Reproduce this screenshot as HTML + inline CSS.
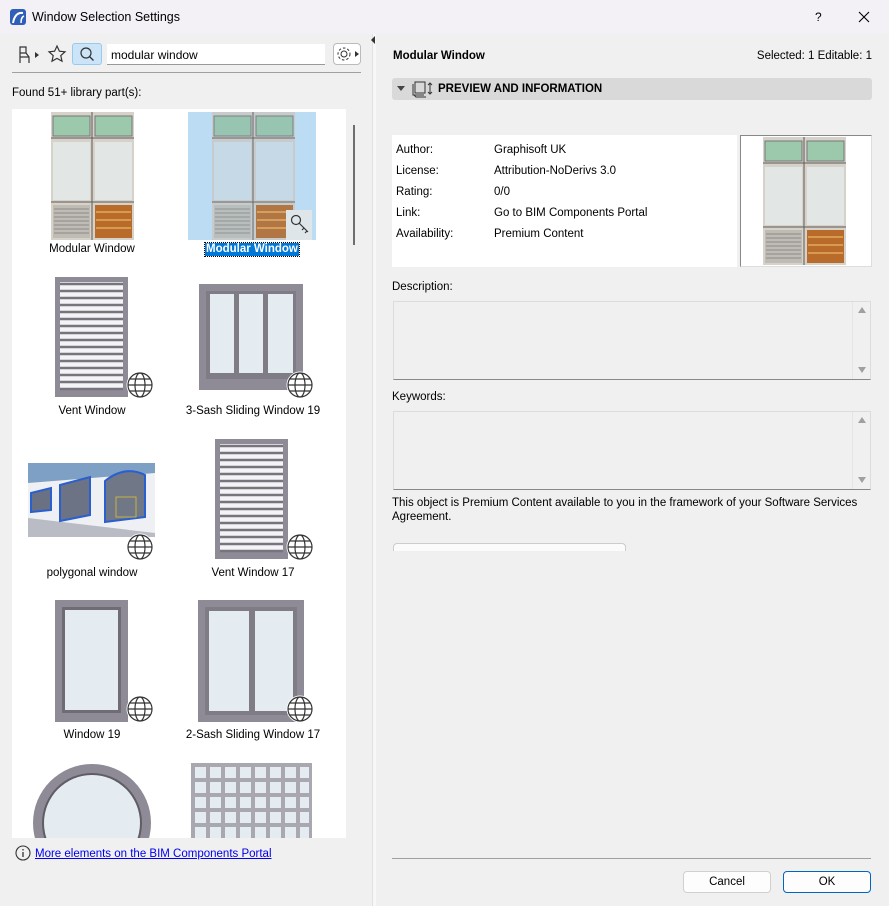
<!DOCTYPE html>
<html><head><meta charset="utf-8"><style>
*{margin:0;padding:0;box-sizing:border-box}
body{width:889px;height:906px;background:#f0f0f0;font-family:"Liberation Sans",sans-serif;font-size:11.5px;color:#000;position:relative;overflow:hidden}
.a{position:absolute}
.lbl{position:absolute;width:160px;text-align:center;font-size:11.5px}
.globe{position:absolute;width:28px;height:28px}
</style></head><body>
<!-- title bar -->
<div class="a" style="left:0;top:0;width:889px;height:34px;background:#f3f0f6"></div>
<svg class="a" style="left:10px;top:9px" width="16" height="16"><rect width="16" height="16" rx="3" fill="#2f5fb8"/><path d="M3 14 Q5 3 13 4" stroke="#fff" stroke-width="2" fill="none"/><path d="M11 14 Q11 8 14 7" stroke="#fff" stroke-width="1.5" fill="none"/></svg>
<div class="a" style="left:32px;top:10px;font-size:12.5px">Window Selection Settings</div>
<div class="a" style="left:815px;top:10px;font-size:12px">?</div>
<svg class="a" style="left:858px;top:11px" width="12" height="12"><path d="M1 1L11 11M11 1L1 11" stroke="#000" stroke-width="1.1"/></svg>

<!-- left toolbar -->
<svg class="a" style="left:17px;top:45px" width="24" height="20"><path d="M3 2h6v6H3zM3 8v10M9 8l3 4v6M3 12h9" stroke="#333" fill="none" stroke-width="1.2"/><path d="M18 7l4 3-4 3z" fill="#333"/></svg>
<svg class="a" style="left:47px;top:44px" width="20" height="20"><path d="M10 2l2.4 5.2 5.6.6-4.2 3.8 1.2 5.6L10 14.4 5 17.2l1.2-5.6L2 7.8l5.6-.6z" stroke="#333" fill="none" stroke-width="1.2"/></svg>
<div class="a" style="left:72px;top:43px;width:30px;height:22px;background:#cce4f7;border:1px solid #99c9ef;border-radius:3px"></div>
<svg class="a" style="left:79px;top:46px" width="16" height="16"><circle cx="7" cy="7" r="5" stroke="#333" fill="none" stroke-width="1.2"/><path d="M10.5 10.5l4 4" stroke="#333" stroke-width="1.3"/></svg>
<div class="a" style="left:107px;top:44px;width:218px;height:21px;background:#fff;border-bottom:1px solid #999;padding:4px 4px;font-size:12px">modular window</div>
<div class="a" style="left:333px;top:43px;width:28px;height:22px;background:#fff;border:1px solid #bbb;border-radius:4px"></div>
<svg class="a" style="left:335px;top:45px" width="26" height="18"><circle cx="9" cy="9" r="3" stroke="#333" fill="none"/><circle cx="9" cy="9" r="6" stroke="#333" fill="none" stroke-dasharray="2.5 2"/><path d="M20 6l4 3-4 3z" fill="#333"/></svg>
<div class="a" style="left:12px;top:72px;width:349px;height:1px;background:#a0a0a0"></div>
<div class="a" style="left:12px;top:87px">Found 51+ library part(s):</div>

<!-- list -->
<div class="a" style="left:12px;top:109px;width:334px;height:729px;background:#fff;overflow:hidden">
 <svg class="a" style="left:39px;top:3px" width="83" height="128"><rect width="83" height="128" fill="#d6d1c9"/><rect x="2" y="4" width="37" height="20" fill="#9cc8ac" stroke="#777"/><rect x="44" y="4" width="37" height="20" fill="#9cc8ac" stroke="#777"/><rect x="2" y="30" width="37" height="58" fill="#e2e6e5"/><rect x="44" y="30" width="37" height="58" fill="#e2e6e5"/><path d="M0 26h83M41 0v128M0 90h83" stroke="#5f5a55"/><rect x="2" y="93" width="37" height="33" fill="#bfbcb6"/><rect x="44" y="93" width="37" height="33" fill="#b86b2b"/><path d="M3 97h35M3 101h35M3 105h35M3 109h35M3 113h35M3 117h35M3 121h35" stroke="#8d8a86" stroke-width="1"/><path d="M45 100h35M45 108h35M45 116h35" stroke="#d89a4c" stroke-width="2"/></svg>
 <div class="lbl" style="left:0;top:134px">Modular Window</div>
 <div class="a" style="left:176px;top:3px;width:128px;height:128px;background:#bcdcf3"></div>
 <svg class="a" style="left:200px;top:3px" width="83" height="128" opacity="0.9"><rect width="83" height="128" fill="#c9cac8"/><rect x="2" y="4" width="37" height="20" fill="#95c3ac" stroke="#777"/><rect x="44" y="4" width="37" height="20" fill="#95c3ac" stroke="#777"/><rect x="2" y="30" width="37" height="58" fill="#c6d9e6"/><rect x="44" y="30" width="37" height="58" fill="#c6d9e6"/><path d="M0 26h83M41 0v128M0 90h83" stroke="#5f5a55"/><rect x="2" y="93" width="37" height="33" fill="#b8bab9"/><rect x="44" y="93" width="37" height="33" fill="#b06b30"/><path d="M3 97h35M3 101h35M3 105h35M3 109h35M3 113h35M3 117h35M3 121h35" stroke="#8d8a86"/><path d="M45 100h35M45 108h35M45 116h35" stroke="#d89a4c" stroke-width="2"/></svg>
 <div class="a" style="left:274px;top:101px;width:26px;height:30px;background:#dfe6ea"></div>
 <svg class="a" style="left:277px;top:104px" width="24" height="24"><circle cx="7" cy="7" r="4.5" stroke="#333" fill="none" stroke-width="1.2"/><path d="M10 10l9 9M15 15l-2 2M18 18l-2 2" stroke="#333" stroke-width="1.2"/></svg>
 <div class="a" style="left:193px;top:134px;height:13px;background:#0078d7;color:#fff;padding:0 1px;outline:1px dotted #000;line-height:13px;font-weight:bold">Modular Window</div>
 <svg class="a" style="left:43px;top:168px" width="73" height="120"><rect width="73" height="120" fill="#8e8b96"/><rect x="5" y="5" width="63" height="108" fill="#f4f4f6"/><g stroke="#77747e" stroke-width="2.5"><path d="M5 7h63M5 14h63M5 21h63M5 28h63M5 35h63M5 42h63M5 49h63M5 56h63M5 63h63M5 70h63M5 77h63M5 84h63M5 91h63M5 98h63M5 105h63M5 112h63"/></g></svg>
 <svg class="globe" style="left:114px;top:262px" viewBox="0 0 28 28"><circle cx="14" cy="14" r="13.5" fill="#fff"/><g stroke="#333" fill="none" stroke-width="1.2"><circle cx="14" cy="14" r="12"/><ellipse cx="14" cy="14" rx="5" ry="12"/><path d="M2 14h24M4 8h20M4 20h20"/></g></svg>
 <div class="lbl" style="left:0;top:296px">Vent Window</div>
 <svg class="a" style="left:187px;top:175px" width="104" height="106"><rect width="104" height="106" fill="#8e8b96"/><rect x="7" y="7" width="90" height="88" fill="#7f7c86"/><rect x="11" y="10" width="24" height="79" fill="#e4ebf1"/><rect x="40" y="10" width="24" height="79" fill="#e4ebf1"/><rect x="69" y="10" width="25" height="79" fill="#e4ebf1"/></svg>
 <svg class="globe" style="left:274px;top:262px" viewBox="0 0 28 28"><circle cx="14" cy="14" r="13.5" fill="#fff"/><g stroke="#333" fill="none" stroke-width="1.2"><circle cx="14" cy="14" r="12"/><ellipse cx="14" cy="14" rx="5" ry="12"/><path d="M2 14h24M4 8h20M4 20h20"/></g></svg>
 <div class="lbl" style="left:161px;top:296px">3-Sash Sliding Window 19</div>
 <svg class="a" style="left:16px;top:354px" width="127" height="74"><rect width="127" height="74" fill="#eef0f3"/><path d="M0 0h127v10L0 20z" fill="#7ea0c4"/><path d="M0 55L127 70V74H0z" fill="#b9bcc4"/><path d="M3 30l20-5v22l-20 2z" fill="#6a7182" stroke="#2a5fd0" stroke-width="2"/><path d="M32 22l30-8v38l-30 6z" fill="#6c7384" stroke="#2a5fd0" stroke-width="2"/><path d="M77 18q20-16 40-6v42l-40 5z" fill="#707786" stroke="#2a5fd0" stroke-width="2"/><path d="M88 34h20v20h-20z" fill="none" stroke="#c8b040"/></svg>
 <svg class="globe" style="left:114px;top:424px" viewBox="0 0 28 28"><circle cx="14" cy="14" r="13.5" fill="#fff"/><g stroke="#333" fill="none" stroke-width="1.2"><circle cx="14" cy="14" r="12"/><ellipse cx="14" cy="14" rx="5" ry="12"/><path d="M2 14h24M4 8h20M4 20h20"/></g></svg>
 <div class="lbl" style="left:0;top:458px">polygonal window</div>
 <svg class="a" style="left:203px;top:330px" width="73" height="120"><rect width="73" height="120" fill="#8e8b96"/><rect x="5" y="5" width="63" height="108" fill="#f4f4f6"/><g stroke="#77747e" stroke-width="2.5"><path d="M5 7h63M5 14h63M5 21h63M5 28h63M5 35h63M5 42h63M5 49h63M5 56h63M5 63h63M5 70h63M5 77h63M5 84h63M5 91h63M5 98h63M5 105h63M5 112h63"/></g></svg>
 <svg class="globe" style="left:274px;top:424px" viewBox="0 0 28 28"><circle cx="14" cy="14" r="13.5" fill="#fff"/><g stroke="#333" fill="none" stroke-width="1.2"><circle cx="14" cy="14" r="12"/><ellipse cx="14" cy="14" rx="5" ry="12"/><path d="M2 14h24M4 8h20M4 20h20"/></g></svg>
 <div class="lbl" style="left:161px;top:458px">Vent Window 17</div>
 <svg class="a" style="left:43px;top:491px" width="73" height="122"><rect width="73" height="122" fill="#8e8b96"/><rect x="7" y="7" width="59" height="106" fill="#6f6c76"/><rect x="10" y="10" width="53" height="100" fill="#e4ebf1"/></svg>
 <svg class="globe" style="left:114px;top:586px" viewBox="0 0 28 28"><circle cx="14" cy="14" r="13.5" fill="#fff"/><g stroke="#333" fill="none" stroke-width="1.2"><circle cx="14" cy="14" r="12"/><ellipse cx="14" cy="14" rx="5" ry="12"/><path d="M2 14h24M4 8h20M4 20h20"/></g></svg>
 <div class="lbl" style="left:0;top:620px">Window 19</div>
 <svg class="a" style="left:186px;top:491px" width="106" height="122"><rect width="106" height="122" fill="#8e8b96"/><rect x="7" y="7" width="92" height="108" fill="#7f7c86"/><rect x="11" y="11" width="40" height="100" fill="#e4ebf1"/><rect x="57" y="11" width="38" height="100" fill="#e4ebf1"/></svg>
 <svg class="globe" style="left:274px;top:586px" viewBox="0 0 28 28"><circle cx="14" cy="14" r="13.5" fill="#fff"/><g stroke="#333" fill="none" stroke-width="1.2"><circle cx="14" cy="14" r="12"/><ellipse cx="14" cy="14" rx="5" ry="12"/><path d="M2 14h24M4 8h20M4 20h20"/></g></svg>
 <div class="lbl" style="left:161px;top:620px">2-Sash Sliding Window 17</div>
 <svg class="a" style="left:20px;top:654px" width="120" height="80"><circle cx="60" cy="60" r="59" fill="#8e8b96"/><circle cx="60" cy="60" r="50" fill="#5f5c66"/><circle cx="60" cy="60" r="48" fill="#e4ebf1"/></svg>
 <svg class="a" style="left:179px;top:654px" width="121" height="80"><defs><pattern id="g" width="15" height="15" patternUnits="userSpaceOnUse"><rect x="4" y="4" width="11" height="11" fill="#e4ebf1"/></pattern></defs><rect width="121" height="80" fill="#a9a7b0"/><rect width="118" height="80" fill="url(#g)"/></svg>
</div>
<div class="a" style="left:353px;top:125px;width:2px;height:120px;background:#6e6e6e"></div>
<svg class="a" style="left:15px;top:845px" width="16" height="16"><circle cx="8" cy="8" r="7" stroke="#333" fill="none" stroke-width="1.1"/><path d="M8 7v5M8 4v1.5" stroke="#333" stroke-width="1.3"/></svg>
<div class="a" style="left:35px;top:848px;color:#0000ee;text-decoration:underline">More elements on the BIM Components Portal</div>

<!-- divider -->
<div class="a" style="left:372px;top:34px;width:4px;height:872px;background:#f7f7f7;border-left:1px solid #e2e2e2"></div>
<svg class="a" style="left:371px;top:36px" width="5" height="8"><path d="M4 0v8L0 4z" fill="#333"/></svg>

<!-- right -->
<div class="a" style="left:393px;top:50px;font-weight:bold">Modular Window</div>
<div class="a" style="right:17px;top:50px">Selected: 1 Editable: 1</div>
<div class="a" style="left:392px;top:78px;width:480px;height:22px;background:#d9d9d9;border-radius:3px"></div>
<svg class="a" style="left:397px;top:86px" width="8" height="6"><path d="M0 0h8L4 5z" fill="#444"/></svg>
<svg class="a" style="left:412px;top:80px" width="22" height="18"><rect x="3" y="2" width="10" height="11" fill="none" stroke="#333"/><path d="M1 4v11h11M2 15l2 2h10" stroke="#333" fill="none"/><path d="M18 3v11M16 5l2-2 2 2M16 12l2 2 2-2" stroke="#333" fill="none"/></svg>
<div class="a" style="left:438px;top:83px;font-weight:bold">PREVIEW AND INFORMATION</div>
<div class="a" style="left:392px;top:135px;width:345px;height:132px;background:#fff"></div>
<div class="a" style="left:396px;top:140px;line-height:21px">Author:<br>License:<br>Rating:<br>Link:<br>Availability:</div>
<div class="a" style="left:494px;top:140px;line-height:21px">Graphisoft UK<br>Attribution-NoDerivs 3.0<br>0/0<br>Go to BIM Components Portal<br>Premium Content</div>
<div class="a" style="left:740px;top:135px;width:132px;height:132px;background:#fff;border:1px solid #888;border-right-color:#ddd;border-bottom-color:#ddd"></div>
<svg class="a" style="left:763px;top:137px" width="83" height="128"><rect width="83" height="128" fill="#d6d1c9"/><rect x="2" y="4" width="37" height="20" fill="#9cc8ac" stroke="#777"/><rect x="44" y="4" width="37" height="20" fill="#9cc8ac" stroke="#777"/><rect x="2" y="30" width="37" height="58" fill="#e2e6e5"/><rect x="44" y="30" width="37" height="58" fill="#e2e6e5"/><path d="M0 26h83M41 0v128M0 90h83" stroke="#5f5a55"/><rect x="2" y="93" width="37" height="33" fill="#bfbcb6"/><rect x="44" y="93" width="37" height="33" fill="#b86b2b"/><path d="M3 97h35M3 101h35M3 105h35M3 109h35M3 113h35M3 117h35M3 121h35" stroke="#8d8a86"/><path d="M45 100h35M45 108h35M45 116h35" stroke="#d89a4c" stroke-width="2"/></svg>

<div class="a" style="left:392px;top:281px">Description:</div>
<div class="a" style="left:393px;top:301px;width:478px;height:79px;border:1px solid #dcdcdc;border-bottom:1px solid #888"></div>
<div class="a" style="left:852px;top:302px;width:1px;height:77px;background:#e4e4e4"></div>
<svg class="a" style="left:858px;top:307px" width="8" height="6"><path d="M0 6h8L4 0z" fill="#a0a0a0"/></svg>
<svg class="a" style="left:858px;top:367px" width="8" height="6"><path d="M0 0h8L4 6z" fill="#a0a0a0"/></svg>
<div class="a" style="left:392px;top:391px">Keywords:</div>
<div class="a" style="left:393px;top:411px;width:478px;height:79px;border:1px solid #dcdcdc;border-bottom:1px solid #888"></div>
<div class="a" style="left:852px;top:412px;width:1px;height:77px;background:#e4e4e4"></div>
<svg class="a" style="left:858px;top:417px" width="8" height="6"><path d="M0 6h8L4 0z" fill="#a0a0a0"/></svg>
<svg class="a" style="left:858px;top:477px" width="8" height="6"><path d="M0 0h8L4 6z" fill="#a0a0a0"/></svg>
<div class="a" style="left:392px;top:496px;width:480px;line-height:14px">This object is Premium Content available to you in the framework of your Software Services Agreement.</div>
<div class="a" style="left:393px;top:543px;width:233px;height:8px;background:#fbfbfb;border:1px solid #ccc;border-bottom:none;border-radius:4px 4px 0 0"></div>

<div class="a" style="left:392px;top:858px;width:479px;height:1px;background:#a0a0a0"></div>
<div class="a" style="left:683px;top:871px;width:88px;height:22px;background:#fdfdfd;border:1px solid #d0d0d0;border-radius:4px;text-align:center;line-height:20px">Cancel</div>
<div class="a" style="left:783px;top:871px;width:88px;height:22px;background:#fdfdfd;border:1px solid #0067c0;border-radius:4px;text-align:center;line-height:20px">OK</div>
</body></html>
